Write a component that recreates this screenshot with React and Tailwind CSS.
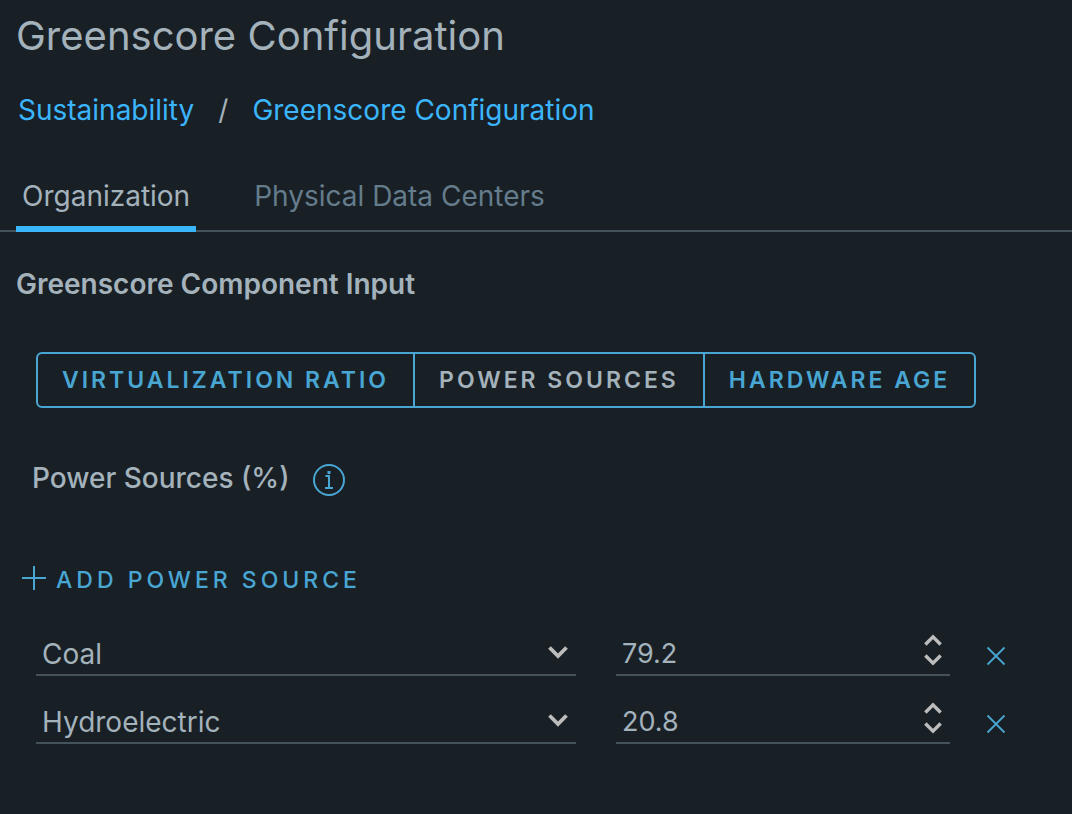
import { useState } from 'react';

const SOURCES = ['Coal', 'Hydroelectric', 'Natural Gas', 'Nuclear', 'Solar', 'Wind'];
const COMPONENTS = ['Virtualization Ratio', 'Power Sources', 'Hardware Age'];
const TABS = ['Organization', 'Physical Data Centers'];

function Chevron({ up, className }) {
  return (
    <svg viewBox="0 0 20 13" fill="none" stroke="#bcbcbc" strokeWidth="3.8" className={className} aria-hidden="true">
      <path d={up ? 'M1.5 11.5 10 3l8.5 8.5' : 'M1.5 1.5 10 10l8.5-8.5'} />
    </svg>
  );
}

function PowerRow({ row, onChange, onRemove }) {
  const step = (delta) => onChange({ ...row, value: (Number(row.value) + delta).toFixed(1) });

  return (
    <li className="flex items-end h-17">
      <div className="relative flex-[540] min-w-0">
        <select
          aria-label="Power source"
          value={row.source}
          onChange={(e) => onChange({ ...row, source: e.target.value })}
          className="block w-full h-12 pl-1.5 pr-12 pt-1.5 appearance-none bg-transparent border-b-2 border-[#44525b] focus:outline-none"
        >
          {SOURCES.map((s) => (
            <option key={s}>{s}</option>
          ))}
        </select>
        <Chevron className="absolute right-2 top-4.5 w-5 h-3.25 pointer-events-none" />
      </div>

      <div className="flex flex-[334] min-w-0 ml-10 h-12 border-b-2 border-[#44525b]">
        <input
          type="text"
          inputMode="decimal"
          aria-label={`${row.source} percentage`}
          value={row.value}
          onChange={(e) => onChange({ ...row, value: e.target.value })}
          className="flex-1 min-w-0 pl-1.5 pt-1.5 bg-transparent text-[27px] focus:outline-none"
        />
        <div className="flex flex-col gap-2 pt-1.5 pr-2">
          <button type="button" aria-label="Increase" onClick={() => step(0.1)}>
            <Chevron up className="block w-4.5 h-3" />
          </button>
          <button type="button" aria-label="Decrease" onClick={() => step(-0.1)}>
            <Chevron className="block w-4.5 h-3" />
          </button>
        </div>
      </div>

      <button type="button" aria-label={`Remove ${row.source}`} onClick={onRemove} className="ml-9 mb-2.5">
        <svg viewBox="0 0 20 20" fill="none" stroke="#49a6d3" strokeWidth="1.8" className="block w-5 h-5">
          <path d="M1.5 1.5l17 17M18.5 1.5l-17 17" />
        </svg>
      </button>
    </li>
  );
}

function App() {
  const [tab, setTab] = useState(TABS[0]);
  const [component, setComponent] = useState('Power Sources');
  const [rows, setRows] = useState([
    { id: 1, source: 'Coal', value: '79.2' },
    { id: 2, source: 'Hydroelectric', value: '20.8' },
  ]);

  const addRow = () => setRows([...rows, { id: Date.now(), source: 'Solar', value: '0.0' }]);

  return (
    <div className="min-h-screen pt-3 pb-8 bg-[#182026] text-[#a4b2bb] text-[28px] leading-10 font-['Inter',sans-serif]">
      <h1 className="px-4 text-[40px] leading-12">Greenscore Configuration</h1>

      {/* Breadcrumb */}
      <nav aria-label="Breadcrumb" className="mt-7.5 px-4.5">
        <ol className="flex gap-6 text-[#3bb5fc]">
          <li><a href="#sustainability">Sustainability</a></li>
          <li aria-hidden="true" className="text-[#a4b2bb]">/</li>
          <li><a href="#greenscore" aria-current="page">Greenscore Configuration</a></li>
        </ol>
      </nav>

      {/* Tabs */}
      <div role="tablist" className="flex gap-13 mt-9 px-4 border-b-2 border-[#44525b]">
        {TABS.map((t) => (
          <button
            key={t}
            type="button"
            role="tab"
            aria-selected={tab === t}
            onClick={() => setTab(t)}
            className={`-mb-0.5 px-1.5 pt-2.5 pb-2.5 border-b-6 ${
              tab === t ? 'border-[#3bb5fc]' : 'border-transparent text-[#647c8b]'
            }`}
          >
            {t}
          </button>
        ))}
      </div>

      <h2 className="mt-8 px-4 font-semibold">Greenscore Component Input</h2>

      {/* Component switch */}
      <div className="flex w-fit mt-12 ml-9 border-2 border-[#49a6d3] rounded-md divide-x-2 divide-[#49a6d3]">
        {COMPONENTS.map((c) => (
          <button
            key={c}
            type="button"
            aria-pressed={component === c}
            onClick={() => setComponent(c)}
            className={`h-13 px-6 text-[23px] font-semibold uppercase tracking-[3px] ${
              component === c ? '' : 'text-[#49a6d3]'
            }`}
          >
            {c}
          </button>
        ))}
      </div>

      <div className="flex items-center mt-12.5 px-8 gap-6">
        <h3 className="pb-1 font-medium">Power Sources (%)</h3>
        <button type="button" aria-label="About power sources">
          <svg viewBox="0 0 32 32" fill="none" stroke="#49a6d3" strokeWidth="2" className="block w-8 h-8">
            <circle cx="16" cy="16" r="15" />
            <path d="M12.5 12H16v12M12 24h8" />
            <path d="M14.5 8.5h3" strokeWidth="3" />
          </svg>
        </button>
      </div>

      <button
        type="button"
        onClick={addRow}
        className="flex items-center gap-2.5 mt-14.5 ml-5.5 text-[23px] font-medium uppercase tracking-[4px] text-[#49a6d3]"
      >
        <svg viewBox="0 0 24 24" fill="none" stroke="currentColor" strokeWidth="2" className="w-6 h-6 mb-1">
          <path d="M12 0v24M0 12h24" />
        </svg>
        Add Power Source
      </button>

      <ul className="mt-2 pl-9 pr-16.5">
        {rows.map((row) => (
          <PowerRow
            key={row.id}
            row={row}
            onChange={(next) => setRows(rows.map((r) => (r.id === row.id ? next : r)))}
            onRemove={() => setRows(rows.filter((r) => r.id !== row.id))}
          />
        ))}
      </ul>
    </div>
  );
}

export default App;
